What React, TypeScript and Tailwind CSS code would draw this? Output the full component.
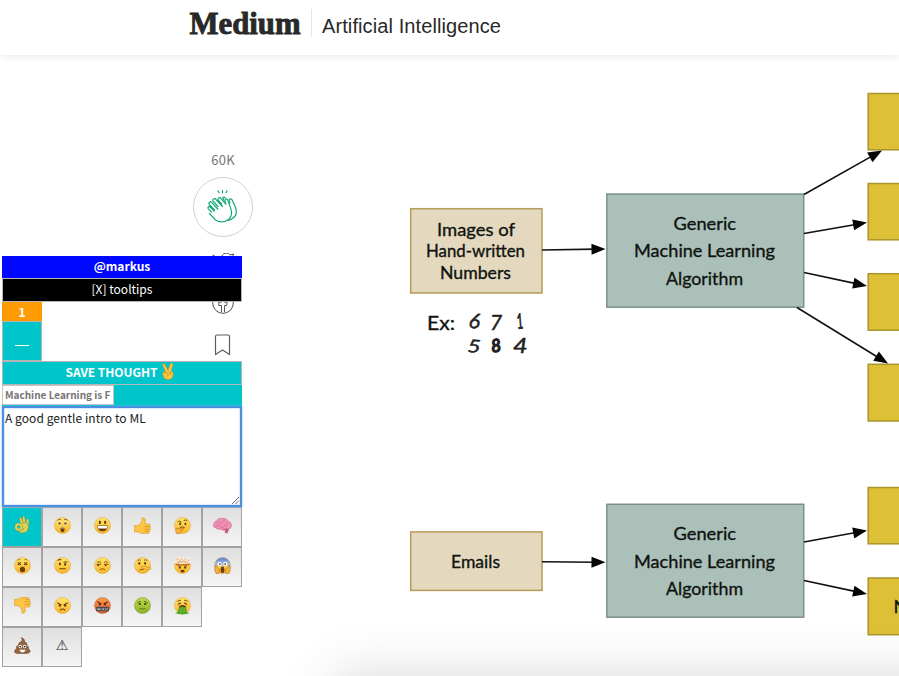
import React from "react";

const ui = "font-['Noto_Sans_CJK_SC','Noto_Sans',sans-serif]";

function Face({ kind }: { kind: string }) {
  const eye = "#6b3d0c";
  const id = "face-" + kind;
  const tones: Record<string, [string, string, string]> = {
    sick: ["#c2d84b", "#8fb326", "#5d7d10"],
    rage: ["#f8a04c", "#e4572c", "#b23a1c"],
  };
  const [top, bottom, rim] = tones[kind] ?? ["#ffe66a", "#f8b728", "#d98c17"];
  return (
    <svg viewBox="0 0 32 32" className="size-[17px] overflow-visible">
      <defs>
        <linearGradient id={id} x1="0" y1="0" x2="0" y2="1">
          <stop offset="0" stopColor={top} />
          <stop offset="1" stopColor={bottom} />
        </linearGradient>
        <linearGradient id="scream-top" x1="0" y1="0" x2="0" y2="1">
          <stop offset="0" stopColor="#4f86d8" />
          <stop offset=".45" stopColor="#a9bfdc" />
          <stop offset=".6" stopColor="#f9cf4f" />
          <stop offset="1" stopColor="#f3a927" />
        </linearGradient>
      </defs>
      <circle cx="16" cy="16" r="15" fill={kind === "scream" ? "url(#scream-top)" : `url(#${id})`} stroke={rim} strokeWidth=".8" />
      {kind === "astonished" && (
        <g>
          <ellipse cx="10.500" cy="12" rx="2.800" ry="3.300" fill="#fff" /><ellipse cx="21.500" cy="12" rx="2.800" ry="3.300" fill="#fff" />
          <circle cx="10.500" cy="12" r="2.200" fill={eye} /><circle cx="21.500" cy="12" r="2.200" fill={eye} />
          <path d="M7 6q3-3 6-1M19 5q3-2 6 1" stroke={eye} strokeWidth="1.500" fill="none" />
          <ellipse cx="16" cy="23.500" rx="4" ry="5" fill={eye} /><path d="M13.500 20.500h5" stroke="#fff" strokeWidth="1.600" />
        </g>
      )}
      {kind === "grin" && (
        <g>
          <ellipse cx="11" cy="10" rx="2" ry="3.500" fill={eye} /><ellipse cx="21" cy="10" rx="2" ry="3.500" fill={eye} />
          <path d="M6 16h20q-1 11-10 11T6 16Z" fill={eye} /><path d="M7 17h18l-1 4.500H8Z" fill="#fff" />
        </g>
      )}
      {kind === "thinking" && (
        <g>
          <path d="M7 9q4-3 7 1M18 7q4-3 7 0M11 20q5-3 9 0" stroke={eye} strokeWidth="1.800" fill="none" />
          <ellipse cx="11.500" cy="13" rx="1.800" ry="2.500" fill={eye} /><ellipse cx="21.500" cy="13" rx="1.800" ry="2.500" fill={eye} />
          <path d="M4 22q1-3 4 0l9-1q3 1 0 3l-4 1q2 3-2 6H5q-3-4-1-9Z" fill="#f8b635" stroke="#b66b0f" strokeWidth="1.200" />
        </g>
      )}
      {kind === "dizzy" && (
        <g>
          <path d="m7 10 6 5m0-5-6 5m12-5 6 5m0-5-6 5" stroke={eye} strokeWidth="2" />
          <path d="M7 6q3-2 5-1M20 5q3-1 5 1" stroke={eye} strokeWidth="1.200" fill="none" />
          <ellipse cx="16" cy="23.500" rx="5" ry="5" fill={eye} />
        </g>
      )}
      {kind === "eyebrow" && (
        <g>
          <path d="M7 7q4-4 7-1M18 10q4-2 7 0M10 22h12" stroke={eye} strokeWidth="2" fill="none" />
          <ellipse cx="11" cy="13" rx="2" ry="2.800" fill={eye} /><ellipse cx="21" cy="14" rx="2" ry="2.500" fill={eye} />
        </g>
      )}
      {kind === "unamused" && (
        <g>
          <path d="M5 14q4-1 8 0M19 14q4-1 8 0M6 10q4-2 7 0M19 10q3-2 7 0M11 24q5-4 10 0" stroke={eye} strokeWidth="1.600" fill="none" />
          <circle cx="8" cy="15.500" r="1.800" fill={eye} /><circle cx="22" cy="15.500" r="1.800" fill={eye} />
        </g>
      )}
      {kind === "lying" && (
        <g>
          <path d="M7 7q3-3 6-1M19 6q3-2 6 1M10 25q4-3 8-1" stroke={eye} strokeWidth="1.600" fill="none" />
          <ellipse cx="10" cy="12" rx="2" ry="2.800" fill={eye} /><ellipse cx="21" cy="12" rx="2" ry="2.800" fill={eye} />
          <path d="M15 17q7 1 16 3 2 2-1 4-10-1-15-3-3-2 0-4Z" fill="#f9c847" stroke="#c9801b" strokeWidth="1.100" />
        </g>
      )}
      {kind === "explode" && (
        <g>
          <path d="M0 0h32v12H0Z" fill="#e8e8e8" />
          <path d="M2 12Q-1 7 3 5 5-1 12 1q8-3 11 1 8 0 7 6 1 3-3 4Z" fill="#f6e8d5" />
          <path d="m6 9 3 2 2-4 4 3 4-3 3 4 3-3M5 4l3 1m5-2 2 2m5-2 2 2m4 0 2 2" stroke="#d58a3c" strokeWidth="1.500" fill="none" />
          <path d="M3 12q13 3 26 0v3q-13 3-26 0Z" fill="#c8682e" />
          <path d="m7 16 6 3m12-3-6 3" stroke={eye} strokeWidth="1.500" />
          <circle cx="11" cy="20" r="2" fill={eye} /><circle cx="21" cy="20" r="2" fill={eye} /><ellipse cx="16" cy="26.500" rx="4" ry="2.500" fill={eye} />
        </g>
      )}
      {kind === "scream" && (
        <g>
          <circle cx="10.500" cy="13" r="4" fill="#fff" /><circle cx="21.500" cy="13" r="4" fill="#fff" />
          <circle cx="11" cy="13" r="1.600" fill={eye} /><circle cx="21" cy="13" r="1.600" fill={eye} />
          <ellipse cx="16" cy="24" rx="3.500" ry="6" fill={eye} />
          <path d="M2 17q3-3 4 2l4 4q2 4-1 8H4q-4-5-2-14Zm28 0q-3-3-4 2l-4 4q-2 4 1 8h5q4-5 2-14Z" fill="#f4b338" stroke="#a96b1d" />
        </g>
      )}
      {kind === "angry" && (
        <g>
          <path d="m6 11 8 4m12-4-8 4M11 25q5-5 10 0" stroke={eye} strokeWidth="2" fill="none" />
          <circle cx="11" cy="16" r="2.200" fill={eye} /><circle cx="21" cy="16" r="2.200" fill={eye} />
        </g>
      )}
      {kind === "rage" && (
        <g>
          <path d="m6 9 8 4m12-4-8 4" stroke="#5c1c10" strokeWidth="2" />
          <circle cx="11" cy="14" r="2" fill="#5c1c10" /><circle cx="21" cy="14" r="2" fill="#5c1c10" />
          <rect x="4" y="18.500" width="24" height="8.500" rx="1" fill="#49474c" />
          <path d="M7 25v-4l3 4v-4m3 0v4m3-4 3 4m0-4-3 4m6-4v4m3-4v4" stroke="#ddd" strokeWidth="1.200" fill="none" />
        </g>
      )}
      {kind === "sick" && (
        <g>
          <path d="m6 11 7-3m13 3-7-3M10 23.500q2-3 4-1.500t4 0 4 1.500" stroke="#465c10" strokeWidth="1.600" fill="none" />
          <circle cx="11" cy="13" r="2.200" fill="#465c10" /><circle cx="21" cy="13" r="2.200" fill="#465c10" />
        </g>
      )}
      {kind === "vomit" && (
        <g>
          <path d="m6 8 7-2m13 2-7-2M7 13l6-2-5 5m17-3-6-2 5 5" stroke={eye} strokeWidth="1.600" fill="none" />
          <path d="M9 21q1-5 7-5t7 5l1 7 5 2-5 2-8 1-9-1-5-2 5-2Z" fill="#58a62b" />
          <path d="M9 20q1-5 7-5t7 5q-7-3-14 0Z" fill={eye} /><path d="M13 21v8m6-8v8" stroke="#8bcb48" />
        </g>
      )}
    </svg>
  );
}

function Thumb({ down = false }: { down?: boolean }) {
  return (
    <svg viewBox="0 0 32 32" className={down ? "size-[17px] -scale-y-100" : "size-[17px]"}>
      <path d="M1 16h7q5-4 7-9V2q4-2 6 2 1 4-1 9h8q4 1 2 5 2 2 0 5 1 3-1 4 0 4-3 4H14l-6-3H1Z" fill="#fcc544" stroke="#d4911d" />
      <path d="M20 18h9m-9 5h9m-8 4h7" stroke="#c98518" strokeWidth="1.200" />
    </svg>
  );
}

function OkHand() {
  return (
    <svg viewBox="0 0 32 36" className="h-[18px] w-[16px]">
      <g fill="none" strokeLinecap="round" strokeLinejoin="round">
        <path d="M17 16 13 6M21 15 19 3M27 18V8" stroke="#8a8c30" strokeWidth="5.500" />
        <path d="M17 16 13 6M21 15 19 3M27 18V8" stroke="#dbd35c" strokeWidth="4" />
        <path d="M15 17q2-5 8-4 6 2 6 9-1 8-7 11l-8 1q-6-3-3-10Z" fill="#dbd35c" stroke="#8a8c30" />
        <circle cx="9.500" cy="22" r="5.500" stroke="#8a8c30" strokeWidth="5.500" />
        <circle cx="9.500" cy="22" r="5.500" stroke="#dbd35c" strokeWidth="4" />
        <path d="m15 28 5-3" stroke="#8a8c30" strokeWidth="1.500" />
      </g>
    </svg>
  );
}

function Brain() {
  return (
    <svg viewBox="0 0 32 32" className="size-[19px]">
      <path d="M1 17Q0 10 6 8q3-5 9-4 7-1 10 4 6 2 6 8 0 6-5 6l-2 7-4-1 1-5q-5 2-9-1-5 1-7-2-4 0-4-3Z" fill="#ee91b3" stroke="#cc6891" />
      <path d="M6 12q3-3 6 0t5-3l3-2M4 17q5-3 8 1t7-1l1-3 5 2M22 10l4 3" stroke="#d56b95" strokeWidth="1.200" fill="none" />
      <path d="m14 22 8-1 5 1-3 6-4-1 1-4Z" fill="#bd5680" />
    </svg>
  );
}

function Poo() {
  return (
    <svg viewBox="0 0 32 32" className="size-[17px]">
      <path d="M14 1q7 3 6 8 6 2 4 7 5 2 3 6 5 3 3 6-2 4-14 3Q2 32 1 28q0-5 4-6-2-5 4-7-1-5 4-6 4-2 1-8Z" fill="#93643f" stroke="#654023" />
      <circle cx="12" cy="18" r="3.200" fill="#fff" /><circle cx="20" cy="18" r="3.200" fill="#fff" />
      <circle cx="12" cy="18" r="1.700" fill="#332114" /><circle cx="20" cy="18" r="1.700" fill="#332114" />
      <path d="M10 24h12q-2 5-6 5t-6-5Z" fill="#fff" />
    </svg>
  );
}

function Victory() {
  return (
    <svg viewBox="0 0 26 32" className="h-[17px] w-[14px]">
      <path d="M8 16 3 5q-1-4 2-4 2 0 3 3l5 10 4-12q2-3 4-1 2 1 1 4l-3 10q4 1 4 6-1 10-10 10-8 0-9-7Q0 17 8 16Z" fill="#fcc83f" stroke="#bd8323" />
      <path d="m5 20 4-3 5 5-4 4m4-9 4 1v4" stroke="#b57a23" strokeWidth="1.400" fill="none" />
    </svg>
  );
}

const rows: React.ReactNode[][] = [
  [<OkHand />, <Face kind="astonished" />, <Face kind="grin" />, <Thumb />, <Face kind="thinking" />, <Brain />],
  [<Face kind="dizzy" />, <Face kind="eyebrow" />, <Face kind="unamused" />, <Face kind="lying" />, <Face kind="explode" />, <Face kind="scream" />],
  [<Thumb down />, <Face kind="angry" />, <Face kind="rage" />, <Face kind="sick" />, <Face kind="vomit" />],
  [<Poo />, <span className="font-['DejaVu_Sans',sans-serif] text-[14px] leading-none text-[#222]">⚠</span>],
];

function ThoughtPanel() {
  return (
    <section className={`absolute left-[2px] top-[256px] flex w-[240px] flex-col ${ui}`}>
      <div className="flex h-[22px] items-center justify-center bg-[#0008ff] pb-0.5 text-[12px] font-bold leading-none text-white">@markus</div>
      <button className="flex h-6 items-center justify-center border border-[#b5b5b5] bg-black pb-0.5 text-[12px] leading-none text-white">[X] tooltips</button>
      <div className="flex h-[19px] w-10 items-center justify-center bg-[#ff9c05] text-[12px] font-bold leading-none text-white">1</div>
      <button className="flex h-10 w-10 items-center justify-center border border-[#b5b5b5] bg-[#00c5ca] pt-2"><span className="h-px w-[14px] bg-white" /></button>
      <button className="flex h-6 items-center justify-center gap-[4px] border border-[#b5b5b5] bg-[#00c5ca] pb-0.5 pr-[3px] text-[12px] font-bold leading-none tracking-[-0.05px] text-white">
        <span>SAVE THOUGHT</span><span className="-mt-0.5"><Victory /></span>
      </button>
      <div className="flex h-[21px] bg-[#00c5ca]">
        <div className="flex h-5 w-[112px] items-center whitespace-nowrap border border-[#c4c4c4] bg-white pl-[2px] text-[10px] font-bold leading-none text-[#757575]">Machine Learning is F</div>
      </div>
      <div className="relative z-10 h-[101px] border-2 border-[#4a90df] bg-white px-px pt-px text-[12px] leading-[18px] tracking-[0.06px] text-[#222] shadow-[0_0_2px_#7db5f5,inset_0_0_2px_#7db5f5]">
        A good gentle intro to ML
        <svg viewBox="0 0 8 8" className="absolute bottom-px right-px size-[7px]"><path d="m0 8 8-8M4 8l4-4" stroke="#555" /></svg>
      </div>
      {rows.map((row, r) => (
        <div key={r} className="flex h-10">
          {row.map((icon, c) => (
            <button key={c} className={`flex size-10 items-center justify-center border border-[#a2a2a2] pb-1 ${r === 0 && c === 0 ? "bg-[#00c5ca]" : "bg-gradient-to-b from-[#dfdfdf] to-[#f5f5f5]"}`}>{icon}</button>
          ))}
        </div>
      ))}
    </section>
  );
}

function Label({ x, y, w, children, size = 18 }: { x: number; y: number; w: number; children: string; size?: number }) {
  return <text x={x} y={y} textLength={w} lengthAdjust="spacingAndGlyphs" fontSize={size} className="fill-[#101310] stroke-[#101310] stroke-[0.350px] font-['Lato',sans-serif]">{children}</text>;
}

function Arrow({ x1, y1, x2, y2 }: { x1: number; y1: number; x2: number; y2: number }) {
  const angle = (Math.atan2(y2 - y1, x2 - x1) * 180) / Math.PI;
  const length = Math.hypot(x2 - x1, y2 - y1);
  return (
    <g transform={`translate(${x1} ${y1}) rotate(${angle})`}>
      <path d={`M0 0H${length - 10}`} stroke="#111" strokeWidth="1.600" />
      <path d={`M${length} 0l-14-5.500v11Z`} fill="#050505" />
    </g>
  );
}

function Diagram() {
  return (
    <svg width="499" height="620" viewBox="400 56 499 620" className="shrink-0">
      <g fill="#e4d8be" stroke="#b79b58" strokeWidth="1.500">
        <rect x="410.700" y="208.700" width="131.300" height="84.300" />
        <rect x="410.700" y="531.900" width="131.300" height="58.500" />
      </g>
      <g fill="#aac0b8" stroke="#70877f" strokeWidth="1.300">
        <rect x="606.800" y="194" width="197" height="113.200" />
        <rect x="606.800" y="504.200" width="197" height="113" />
      </g>
      <g fill="#ddc035" stroke="#aa942c" strokeWidth="1.500">
        <rect x="868.200" y="93.500" width="40" height="56.300" />
        <rect x="868.200" y="183.500" width="40" height="56.300" />
        <rect x="868.200" y="273.700" width="40" height="56.500" />
        <rect x="868.200" y="364.300" width="40" height="56.700" />
        <rect x="868.200" y="487.500" width="40" height="56.300" />
        <rect x="868.200" y="578" width="40" height="56.700" />
      </g>
      <Arrow x1={542} y1={250} x2={605.500} y2={249} />
      <Arrow x1={542} y1={561.700} x2={605.500} y2={562.300} />
      <Arrow x1={804} y1={194.500} x2={882} y2={150.500} />
      <Arrow x1={804} y1={233.500} x2={867} y2={222.500} />
      <Arrow x1={804} y1={272.500} x2={867} y2={286} />
      <Arrow x1={797} y1={307.500} x2={888} y2={363.500} />
      <Arrow x1={804} y1={542} x2={867} y2={530.500} />
      <Arrow x1={804} y1={580.500} x2={867} y2={594} />
      <Label x={437} y={235.500} w={78}>Images of</Label>
      <Label x={426} y={257} w={99}>Hand-written</Label>
      <Label x={440} y={279} w={71}>Numbers</Label>
      <Label x={427} y={330} w={28} size={20}>Ex:</Label>
      <Label x={451} y={567.500} w={49}>Emails</Label>
      <Label x={673.500} y={230} w={62.500}>Generic</Label>
      <Label x={634} y={257.200} w={141}>Machine Learning</Label>
      <Label x={666} y={284.500} w={77}>Algorithm</Label>
      <Label x={673.500} y={540} w={62.500}>Generic</Label>
      <Label x={634} y={567.700} w={141}>Machine Learning</Label>
      <Label x={666} y={595} w={77}>Algorithm</Label>
      <Label x={893.500} y={612.500} w={14}>N</Label>
      <g className="fill-[#222] stroke-[#222] stroke-[0.500px] font-['Lato',sans-serif] italic" fontSize="21">
        <text transform="translate(468 327.500) rotate(8)">6</text>
        <text transform="translate(490 330)">7</text>
        <text transform="translate(517.500 329) rotate(-8) scale(.55 1)" className="stroke-[#222] stroke-[0.900px]">1</text>
        <text transform="translate(467 352) rotate(4) scale(1.100 .85)">5</text>
        <text transform="translate(492 352.500) rotate(-8) scale(.8 .85)" className="stroke-[#222] stroke-[1.800px]">8</text>
        <text transform="translate(513 352.500) scale(1.200 1)">4</text>
      </g>
    </svg>
  );
}

function ShareColumn() {
  return (
    <aside className="flex w-[60px] flex-col items-center pt-[97px]">
      <span className={`text-[13px] leading-4 tracking-[0.3px] text-[#757575] ${ui}`}>60K</span>
      <div className="mt-[9px] flex size-[60px] shrink-0 items-center justify-center rounded-full border border-[#d2d2d2]">
        <svg viewBox="0 0 33 34" className="-ml-px h-[34px] w-[33px]" fill="none" stroke="#16a875" strokeWidth="1.200" strokeLinecap="round" strokeLinejoin="round">
          <path d="m12 .8 1 2M16.500 .6v2.200M21 .8l-1 2" />
          <path d="m5.500 22-3.200-3.200q-1-2 1-2.500l5 4.700M8.500 20l-5.200-5.500q-1-2.500 1.500-2.800l7 7.300M12 16.500 7 11q-.7-2.700 2-2.500l7.500 8M15.500 14 12 10q-.3-2.500 2.200-2.300l5.600 6.500-.8-3.800q1-2.500 2.500-1l3 8.500q3 8-2.500 12-6 4-12.500 0l-6-6.400" />
          <path d="m18 10.300-1.300-2.300q1-1.500 2.500-.2M24 13l-1-3q1-2 3-.3l3.300 7.300q3 8-3 11.500-2 2-5 1.500" />
        </svg>
      </div>
      <svg viewBox="0 0 24 24" className="mt-[16px] size-6 shrink-0" fill="none" stroke="#555"><path d="M2 2q4 4 9 4-1-5 4-6 3 0 4 2l4-1-2 3q1 14-13 16l-6-2q4 0 6-3-4-1-5-4l2-1Q2 7 2 2Z" /></svg>
      <svg viewBox="0 0 24 24" className="-ml-px mt-[14px] size-6 shrink-0" fill="none" stroke="#555"><circle cx="12" cy="12" r="10.300" /><path d="M10.500 21v-6.500H7.800v-3.300h2.700V9q0-3.500 5-3v2.700q-2-.2-2 1v1.500h2.600l-.5 3.300h-2.100V21" /></svg>
      <svg viewBox="0 0 17 22" className="-ml-px mt-[19px] h-[22px] w-[17px] shrink-0" fill="none" stroke="#5c5c5c" strokeWidth="1.200"><path d="M1.500 2.500q0-1.500 1.500-1.500h11q1.500 0 1.500 1.500v18L8.500 16l-7 4.500Z" strokeLinejoin="round" /></svg>
    </aside>
  );
}

export default function App() {
  return (
    <div className="relative flex h-[676px] w-[899px] flex-col overflow-hidden bg-white">
      <header className="z-10 flex h-[55px] shrink-0 pl-[189px] shadow-[0_1px_8px_rgba(0,0,0,0.10)]">
        <svg width="112" height="42" className="shrink-0" aria-label="Medium">
          <text x="0.500" y="33.500" fontSize="31" textLength="111" lengthAdjust="spacingAndGlyphs" className="fill-[#292929] stroke-[#292929] stroke-[0.900px] font-['Liberation_Serif',serif] font-bold">Medium</text>
        </svg>
        <span className="ml-[10px] mt-[9px] h-7 w-px bg-[#e5e5e5]" />
        <span className="ml-[10px] mt-[11px] whitespace-nowrap font-['Liberation_Sans',sans-serif] text-[20px] leading-[30px] tracking-[0.1px] text-[#292929]">Artificial Intelligence</span>
      </header>
      <main className="flex flex-1 pl-[193px]">
        <ShareColumn />
        <div className="w-[147px] shrink-0" />
        <div className="mt-px shrink-0"><Diagram /></div>
      </main>
      <div className="absolute -right-24 left-[334px] top-[677px] h-32 shadow-[0_0_56px_rgba(0,0,0,0.16)]" />
      <ThoughtPanel />
    </div>
  );
}
